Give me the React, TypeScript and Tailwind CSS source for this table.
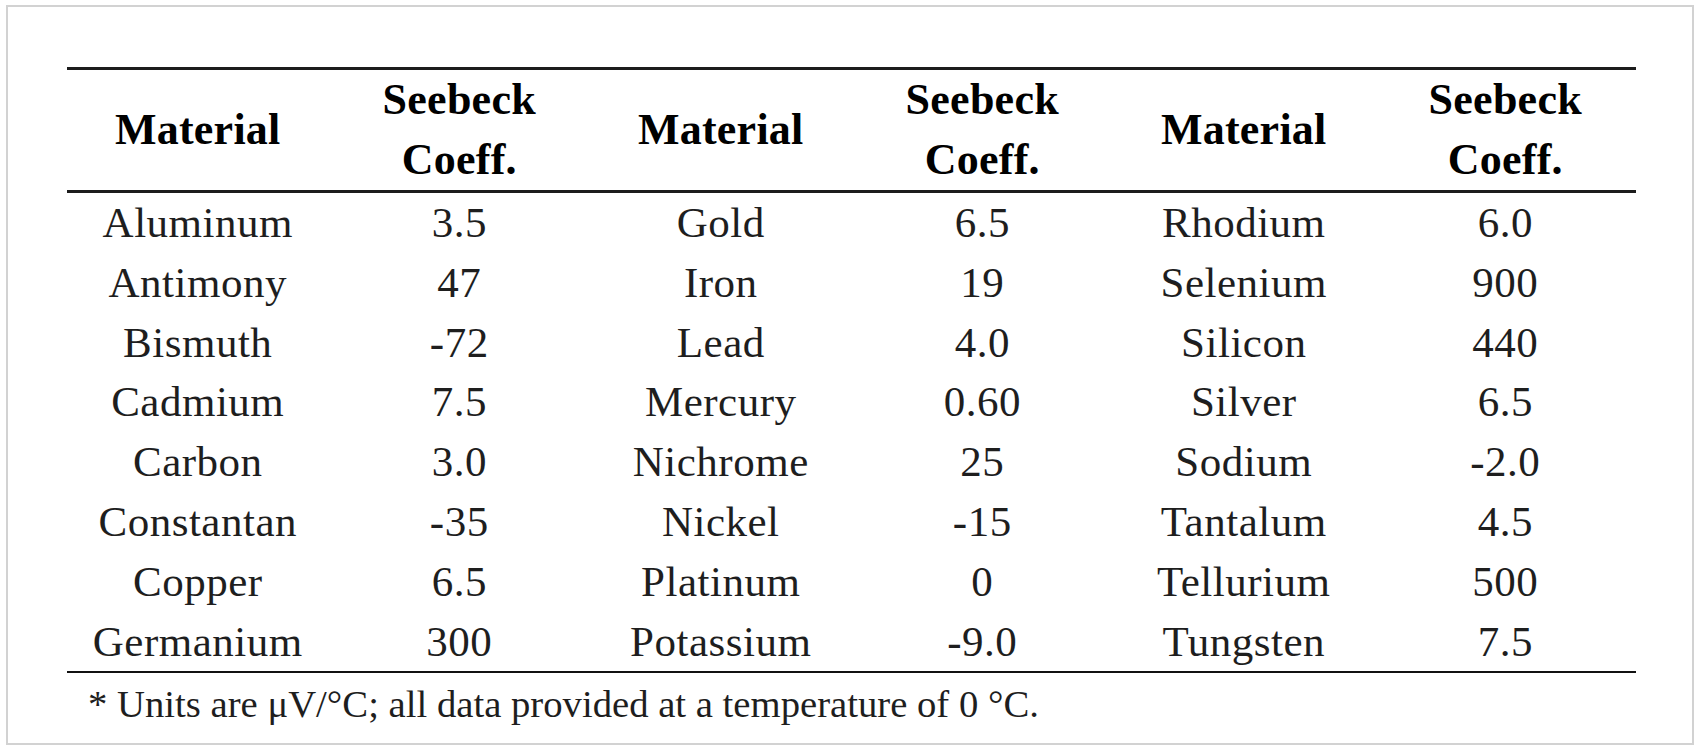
import React from "react";

const cols: [string, string][][] = [
  [
    ["Aluminum", "3.5"],
    ["Antimony", "47"],
    ["Bismuth", "-72"],
    ["Cadmium", "7.5"],
    ["Carbon", "3.0"],
    ["Constantan", "-35"],
    ["Copper", "6.5"],
    ["Germanium", "300"],
  ],
  [
    ["Gold", "6.5"],
    ["Iron", "19"],
    ["Lead", "4.0"],
    ["Mercury", "0.60"],
    ["Nichrome", "25"],
    ["Nickel", "-15"],
    ["Platinum", "0"],
    ["Potassium", "-9.0"],
  ],
  [
    ["Rhodium", "6.0"],
    ["Selenium", "900"],
    ["Silicon", "440"],
    ["Silver", "6.5"],
    ["Sodium", "-2.0"],
    ["Tantalum", "4.5"],
    ["Tellurium", "500"],
    ["Tungsten", "7.5"],
  ],
];

export default function App() {
  const rows = cols[0].map((_, i) => cols.flatMap((c) => c[i]));
  return (
    <div
      className="w-[1701px] h-[752px] bg-white pt-[5px] pl-[6px]"
      style={{ fontFamily: '"Liberation Serif", "Times New Roman", serif' }}
    >
      <div className="w-[1688px] h-[740px] border-2 border-[#d2d2d2] pt-[60px] pl-[59px]">
        <div className="w-[1569px]">
          <div className="h-[3px] bg-[#1c1c1c]" />
          <div className="grid grid-cols-6 h-[120px] text-[44px] font-bold text-black leading-[60px] tracking-[0.25px]">
            {[0, 1, 2].map((k) => (
              <React.Fragment key={k}>
                <div className="flex items-center justify-center">Material</div>
                <div className="flex flex-col items-center justify-center text-center">
                  <span>Seebeck</span>
                  <span>Coeff.</span>
                </div>
              </React.Fragment>
            ))}
          </div>
          <div className="h-[3px] bg-[#1c1c1c]" />
          <div className="text-[43px] text-[#1e1e1e] tracking-[0.5px]">
            {rows.map((r, i) => (
              <div key={i} className="grid grid-cols-6 h-[59.8px] leading-[59.8px]">
                {r.map((v, j) => (
                  <div key={j} className="text-center">
                    {v}
                  </div>
                ))}
              </div>
            ))}
          </div>
          <div className="h-[2px] bg-[#111]" />
          <div className="pl-[21px] pt-[10px] text-[38.7px] text-[#1e1e1e] leading-[42px]">
            * Units are μV/°C; all data provided at a temperature of 0 °C.
          </div>
        </div>
      </div>
    </div>
  );
}
